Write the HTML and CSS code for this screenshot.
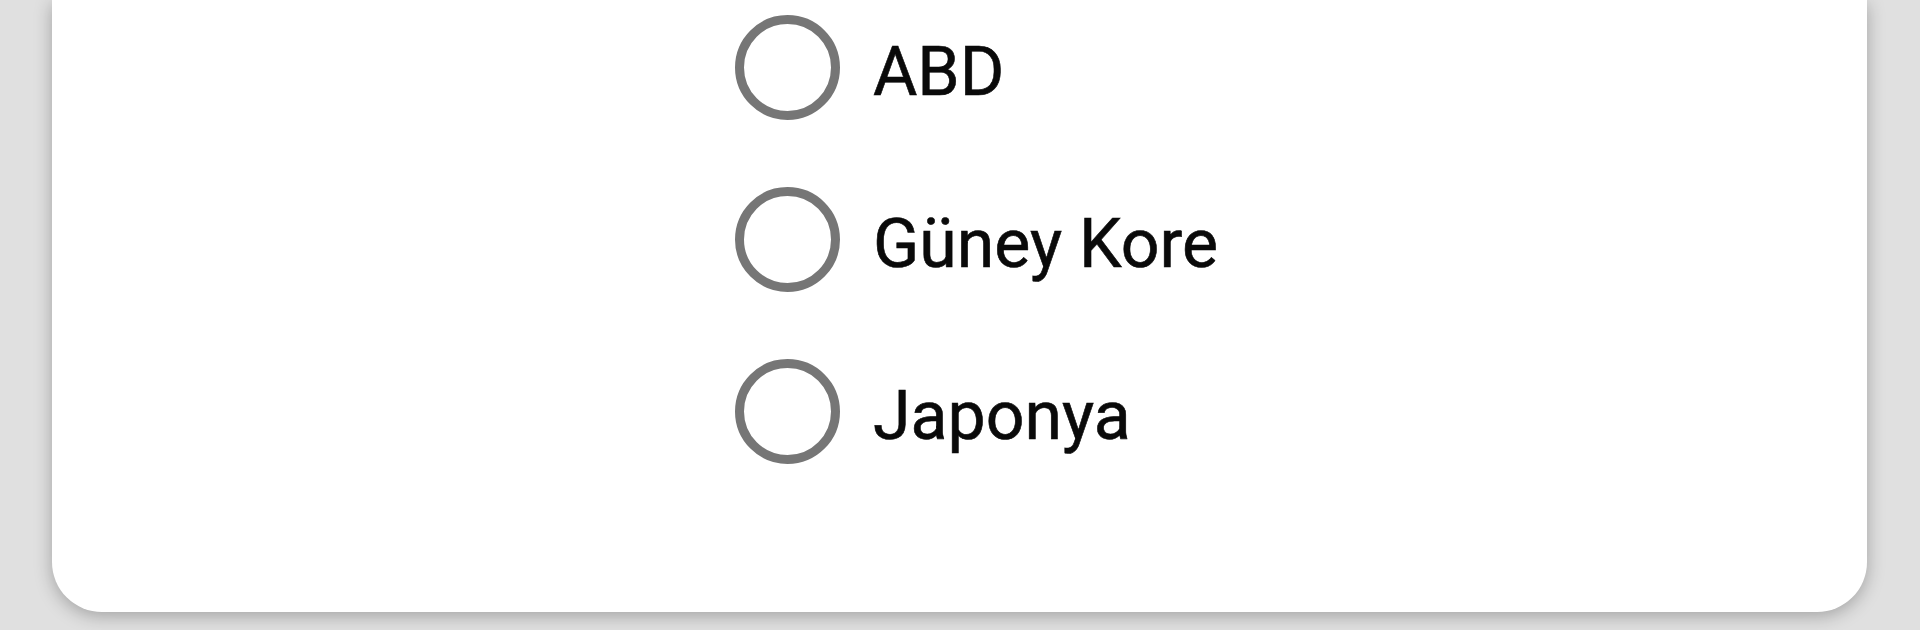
FILE: index.html
```html
<!DOCTYPE html>
<html lang="tr">
<head>
    <meta charset="UTF-8">
    <meta name="viewport" content="width=device-width, initial-scale=1.0">
    <title>Soru</title>
    <link rel="stylesheet" href="styles.css">
</head>
<body>
    <div class="card">
        <!-- Answer options -->
        <div class="options">
            <label class="option">
                <span class="radio"></span>
                <span class="option-text">ABD</span>
            </label>
            <label class="option">
                <span class="radio"></span>
                <span class="option-text">Güney Kore</span>
            </label>
            <label class="option">
                <span class="radio"></span>
                <span class="option-text">Japonya</span>
            </label>
        </div>
    </div>
</body>
</html>
```

FILE: styles.css
```css
/* General Styles */
body {
    font-family: Roboto, 'Noto Sans', sans-serif;
    margin: 0;
    padding: 0 53px 18px 52px;
    background-color: #e0e0e0; /* Light grey page */
    overflow: hidden;
}

.card {
    background-color: #fff;
    height: 612px;
    box-sizing: border-box;
    border-radius: 0 0 50px 50px;
    box-shadow: 0 4px 18px rgba(0, 0, 0, 0.28);
    padding: 14px 0 0 683px;
}

/* Options */
.options {
    display: flex;
    flex-direction: column;
    gap: 66px;
}

.option {
    display: flex;
    align-items: center;
    gap: 33px;
    height: 106px;
    cursor: pointer;
}

.radio {
    width: 105px;
    height: 105px;
    box-sizing: border-box;
    border: 9px solid #767676; /* Unchecked radio ring */
    border-radius: 50%;
    flex-shrink: 0;
}

.option-text {
    font-size: 68px;
    color: #0a0a0a;
    padding-top: 10px;
    -webkit-text-stroke: 0.6px #0a0a0a; /* a touch heavier, like the reference */
}
```
